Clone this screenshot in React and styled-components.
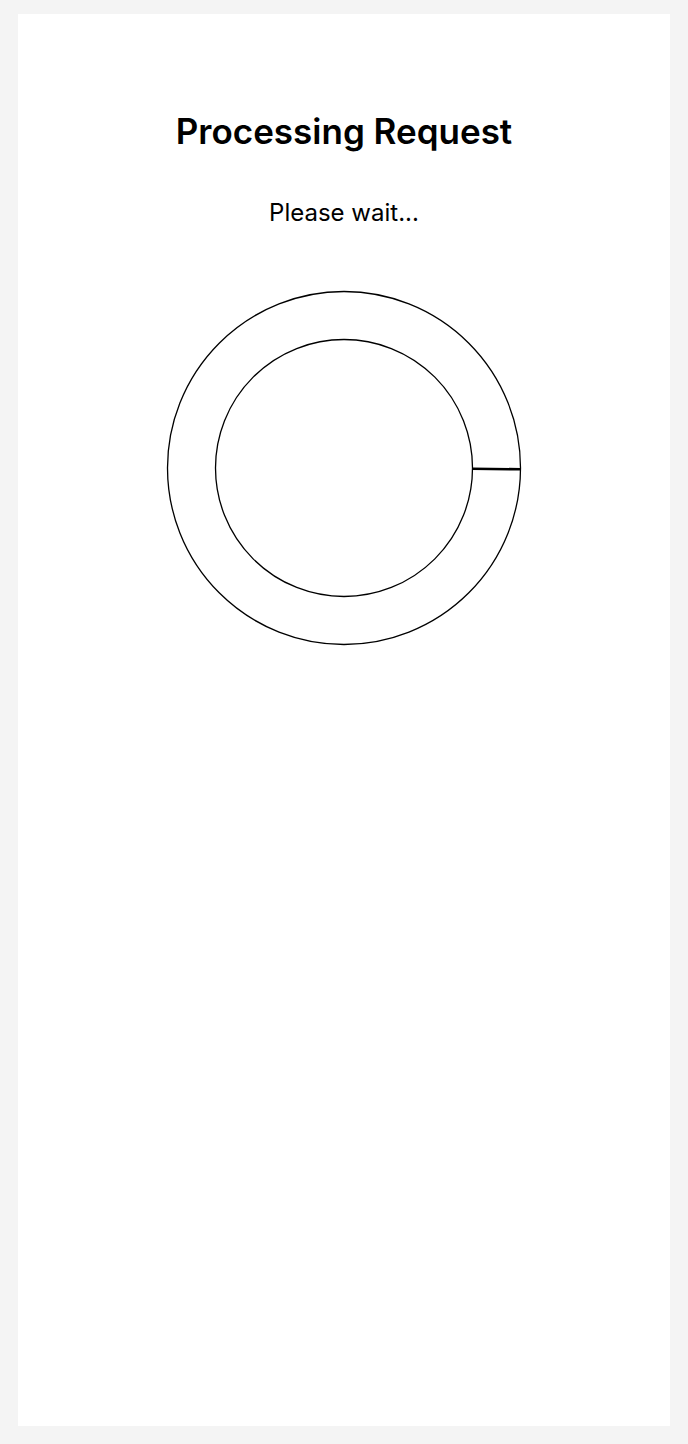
import React from "react";
import styled, { createGlobalStyle } from "styled-components";

const GlobalStyle = createGlobalStyle`
  html, body {
    margin: 0;
    padding: 0;
    background: #f4f4f4;
  }
  body {
    font-family: Inter, "Noto Sans", "Liberation Sans", sans-serif;
    color: #000;
  }
`;

const Page = styled.div`
  box-sizing: border-box;
  min-height: 1444px;
  padding: 14px 18px 18px;
  display: flex;
`;

const Card = styled.main`
  flex: 1;
  background: #fff;
  display: flex;
  flex-direction: column;
  align-items: center;
  padding-top: 95px;
`;

const Title = styled.h1`
  margin: 0;
  font-size: 35px;
  font-weight: 600;
  line-height: 44px;
`;

const Subtitle = styled.p`
  margin: 45px 0 0;
  font-size: 24px;
  font-weight: 400;
  line-height: 30px;
`;

const Ring = styled.svg`
  margin-top: 62px;
  display: block;
`;

function Spinner() {
  return (
    <Ring width="356" height="356" viewBox="0 0 356 356" fill="none">
      <circle cx="178" cy="178" r="176.5" stroke="#000" strokeWidth="1.3" />
      <circle cx="178" cy="178" r="128.5" stroke="#000" strokeWidth="1.3" />
      <line x1="306" y1="178.8" x2="354.5" y2="179.3" stroke="#000" strokeWidth="2.6" />
    </Ring>
  );
}

export default function App() {
  return (
    <>
      <GlobalStyle />
      <Page>
        <Card>
          <Title>Processing Request</Title>
          <Subtitle>Please wait...</Subtitle>
          <Spinner />
        </Card>
      </Page>
    </>
  );
}
